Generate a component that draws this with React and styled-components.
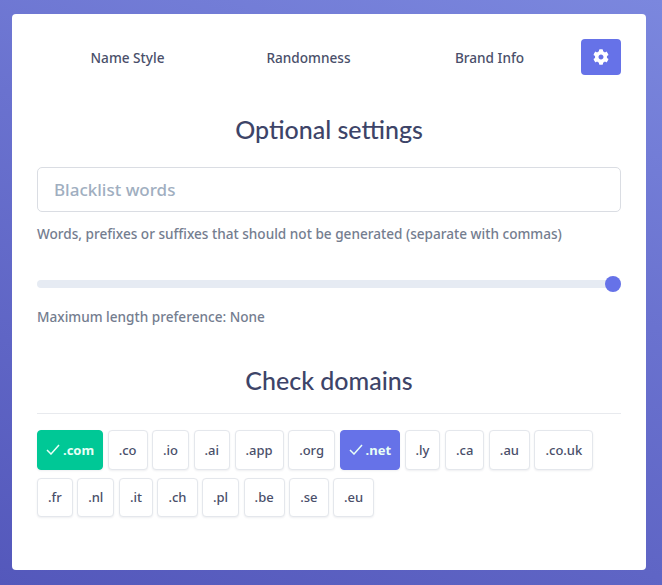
import styled, { createGlobalStyle } from 'styled-components';
import { FaCog } from 'react-icons/fa';

const GlobalStyle = createGlobalStyle`
  html, body { margin: 0; padding: 0; }
  body { font-family: "Noto Sans", sans-serif; }
  * { box-sizing: border-box; }
`;

const Page = styled.div`
  width: 662px;
  height: 585px;
  padding: 14px 16px 15px 12px;
  background: linear-gradient(20deg, #5458bb 0%, #6a72cf 60%, #7b87de 100%);
`;

const Card = styled.div`
  height: 556px;
  padding: 25px 25px 0;
  background: #fff;
  border-radius: 4px;
`;

const Tabs = styled.nav`
  display: flex;
  align-items: center;
  height: 36px;
`;

const Tab = styled.a`
  flex: 1;
  padding-top: 1px;
  text-align: center;
  font-size: 13.6px;
  font-weight: 500;
  color: #4a4f6a;
`;

const GearButton = styled.button`
  display: flex;
  align-items: center;
  justify-content: center;
  width: 40px;
  height: 36px;
  margin-left: 1px;
  padding: 0;
  border: 0;
  border-radius: 4px;
  background: #6672e8;
  color: #fff;
  font-size: 16px;
`;

const Heading = styled.h2`
  margin: ${p => p.$top}px 0 0;
  text-align: center;
  font-family: Lato, sans-serif;
  font-size: 25px;
  line-height: 30px;
  font-weight: 500;
  color: #3d4468;
`;

const Input = styled.input`
  display: block;
  width: 100%;
  height: 45px;
  margin-top: 23px;
  padding: 0 16px;
  border: 1px solid #dadde3;
  border-radius: 5px;
  font-family: inherit;
  font-size: 17px;
  font-weight: 500;
  &::placeholder { color: #a0aec0; opacity: 1; }
`;

const Hint = styled.p`
  margin: ${p => p.$top}px 0 0;
  font-size: 13.6px;
  line-height: 18px;
  font-weight: 500;
  color: #747d8f;
`;

const Slider = styled.div`
  position: relative;
  height: 8px;
  margin-top: 37px;
  border-radius: 4px;
  background: #e6ebf3;
`;

const Thumb = styled.span`
  position: absolute;
  right: 0;
  top: -4px;
  width: 16px;
  height: 16px;
  border-radius: 50%;
  background: #6672e8;
`;

const Divider = styled.hr`
  height: 1px;
  margin: 18px 0 16px;
  border: 0;
  background: #e8eaee;
`;

const Chips = styled.div`
  display: flex;
  flex-wrap: wrap;
  gap: 8px 4.5px;
`;

const Chip = styled.span`
  display: inline-flex;
  align-items: center;
  justify-content: center;
  gap: 3px;
  height: 39.5px;
  padding: ${p => (p.$color ? '0 8px' : '0 10px')};
  border-radius: 4px;
  border: 1px solid ${p => p.$color || '#e4e7ec'};
  background: ${p => p.$color || '#fff'};
  box-shadow: 0 1px 2px rgba(40, 50, 80, 0.08);
  font-size: 13px;
  font-weight: ${p => (p.$color ? 700 : 500)};
  color: ${p => (p.$color ? '#e8fff6' : '#4a4f6a')};
`;

const Check = () => (
  <svg width="14" height="11" viewBox="0 0 14 11" fill="none" stroke="currentColor" strokeWidth="1.5">
    <path d="M1 6l4 4 8-9" />
  </svg>
);

const domains = [
  { name: '.com', color: '#00c896' },
  { name: '.co' },
  { name: '.io' },
  { name: '.ai' },
  { name: '.app' },
  { name: '.org' },
  { name: '.net', color: '#6672e8' },
  { name: '.ly' },
  { name: '.ca' },
  { name: '.au' },
  { name: '.co.uk' },
  { name: '.fr' },
  { name: '.nl' },
  { name: '.it' },
  { name: '.ch' },
  { name: '.pl' },
  { name: '.be' },
  { name: '.se' },
  { name: '.eu' },
];

export default function App() {
  return (
    <>
      <GlobalStyle />
      <Page>
        <Card>
          <Tabs>
            <Tab>Name Style</Tab>
            <Tab>Randomness</Tab>
            <Tab>Brand Info</Tab>
            <GearButton aria-label="Settings"><FaCog /></GearButton>
          </Tabs>
          <Heading $top={39}>Optional settings</Heading>
          <Input placeholder="Blacklist words" />
          <Hint $top={13}>Words, prefixes or suffixes that should not be generated (separate with commas)</Hint>
          <Slider><Thumb /></Slider>
          <Hint $top={20}>Maximum length preference: None</Hint>
          <Heading $top={39}>Check domains</Heading>
          <Divider />
          <Chips>
            {domains.map(d => (
              <Chip key={d.name} $color={d.color}>
                {d.color && <Check />}
                {d.name}
              </Chip>
            ))}
          </Chips>
        </Card>
      </Page>
    </>
  );
}
